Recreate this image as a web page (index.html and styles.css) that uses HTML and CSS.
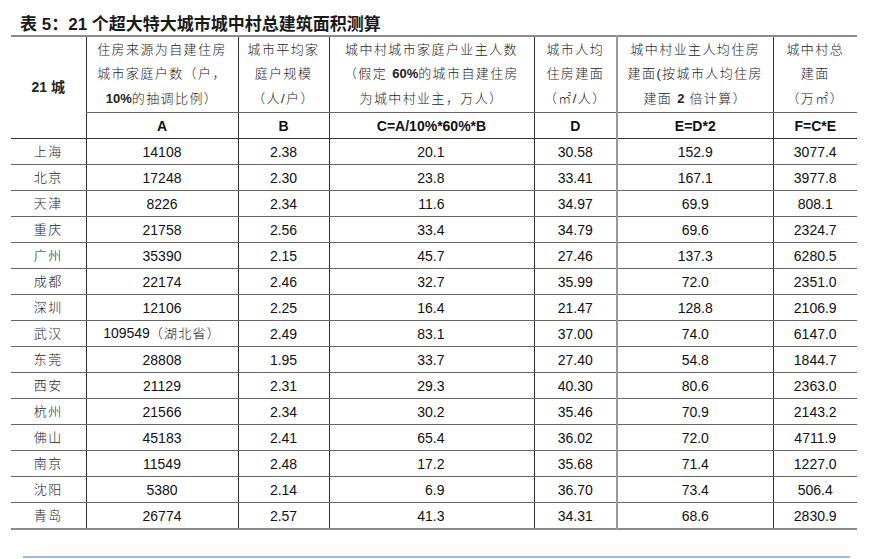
FILE: index.html
```html
<!DOCTYPE html>
<html lang="zh">
<head>
<meta charset="utf-8">
<title>表 5</title>
<link rel="stylesheet" href="styles.css">
</head>
<body>
<div class="page">
  <h1 class="title">表 5：21 个超大特大城市城中村总建筑面积测算</h1>
  <table class="data">
    <colgroup>
      <col class="c1"><col class="c2"><col class="c3"><col class="c4"><col class="c5"><col class="c6"><col class="c7">
    </colgroup>
    <thead>
      <tr class="hd">
        <th rowspan="2" class="city-h"><b>21</b> 城</th>
        <th>住房来源为自建住房<br>城市家庭户数（户，<br><b>10%</b>的抽调比例）</th>
        <th>城市平均家<br>庭户规模<br>（人/户）</th>
        <th>城中村城市家庭户业主人数<br>（假定 <b>60%</b>的城市自建住房<br>为城中村业主，万人）</th>
        <th>城市人均<br>住房建面<br>（㎡/人）</th>
        <th class="sep">城中村业主人均住房<br>建面(按城市人均住房<br>建面 <b>2</b> 倍计算）</th>
        <th>城中村总<br>建面<br>（万㎡）</th>
      </tr>
      <tr class="letters">
        <th>A</th><th>B</th><th>C=A/10%*60%*B</th><th>D</th><th class="sep">E=D*2</th><th>F=C*E</th>
      </tr>
    </thead>
    <tbody>
      <tr><td class="city">上海</td><td>14108</td><td>2.38</td><td class="ra">20.1</td><td>30.58</td><td class="sep">152.9</td><td>3077.4</td></tr>
      <tr><td class="city">北京</td><td>17248</td><td>2.30</td><td class="ra">23.8</td><td>33.41</td><td class="sep">167.1</td><td>3977.8</td></tr>
      <tr><td class="city">天津</td><td>8226</td><td>2.34</td><td class="ra">11.6</td><td>34.97</td><td class="sep">69.9</td><td>808.1</td></tr>
      <tr><td class="city">重庆</td><td>21758</td><td>2.56</td><td class="ra">33.4</td><td>34.79</td><td class="sep">69.6</td><td>2324.7</td></tr>
      <tr><td class="city">广州</td><td>35390</td><td>2.15</td><td class="ra">45.7</td><td>27.46</td><td class="sep">137.3</td><td>6280.5</td></tr>
      <tr><td class="city">成都</td><td>22174</td><td>2.46</td><td class="ra">32.7</td><td>35.99</td><td class="sep">72.0</td><td>2351.0</td></tr>
      <tr><td class="city">深圳</td><td>12106</td><td>2.25</td><td class="ra">16.4</td><td>21.47</td><td class="sep">128.8</td><td>2106.9</td></tr>
      <tr><td class="city">武汉</td><td>109549<span class="cjk">（湖北省）</span></td><td>2.49</td><td class="ra">83.1</td><td>37.00</td><td class="sep">74.0</td><td>6147.0</td></tr>
      <tr><td class="city">东莞</td><td>28808</td><td>1.95</td><td class="ra">33.7</td><td>27.40</td><td class="sep">54.8</td><td>1844.7</td></tr>
      <tr><td class="city">西安</td><td>21129</td><td>2.31</td><td class="ra">29.3</td><td>40.30</td><td class="sep">80.6</td><td>2363.0</td></tr>
      <tr><td class="city">杭州</td><td>21566</td><td>2.34</td><td class="ra">30.2</td><td>35.46</td><td class="sep">70.9</td><td>2143.2</td></tr>
      <tr><td class="city">佛山</td><td>45183</td><td>2.41</td><td class="ra">65.4</td><td>36.02</td><td class="sep">72.0</td><td>4711.9</td></tr>
      <tr><td class="city">南京</td><td>11549</td><td>2.48</td><td class="ra">17.2</td><td>35.68</td><td class="sep">71.4</td><td>1227.0</td></tr>
      <tr><td class="city">沈阳</td><td>5380</td><td>2.14</td><td class="ra">6.9</td><td>36.70</td><td class="sep">73.4</td><td>506.4</td></tr>
      <tr><td class="city">青岛</td><td>26774</td><td>2.57</td><td class="ra">41.3</td><td>34.31</td><td class="sep">68.6</td><td>2830.9</td></tr>
    </tbody>
  </table>
  <div class="rule"></div>
</div>
</body>
</html>
```
FILE: styles.css
```css
html, body {
  margin: 0;
  padding: 0;
  background: #fff;
}

body {
  font-family: "Liberation Sans", "Noto Sans CJK SC", sans-serif;
  color: #111;
}

.page {
  padding: 0 14px 0 11px;
}

.title {
  margin: 0 0 0 9px;
  padding-top: 14px;
  font-size: 17px;
  line-height: 21px;
  height: 21px;
  font-weight: bold;
  color: #1a1a1a;
  font-family: "Liberation Sans", "Noto Sans CJK SC", sans-serif;
}

.data {
  border-collapse: collapse;
  table-layout: fixed;
  width: 846px;
  border-top: 2px solid #8a8a8a;
  border-bottom: 2px solid #8a8a8a;
}

.c1 { width: 75px; }
.c2 { width: 152px; }
.c3 { width: 91px; }
.c4 { width: 205px; }
.c5 { width: 83px; }
.c6 { width: 156px; }
.c7 { width: 84px; }

.data th,
.data td {
  padding: 0;
  text-align: center;
  border-left: 1px solid #333;
  border-bottom: 1px solid #666;
  white-space: nowrap;
}

.data tr > :first-child {
  border-left: none;
}

.data .letters th:first-child {
  border-left: 1px solid #333;
}

.data .sep {
  border-left: 2px solid #9a9a9a;
}

.hd th {
  height: 75px;
  font-family: "Liberation Sans", "Noto Sans CJK SC", sans-serif;
  font-weight: 300;
  font-size: 13px;
  letter-spacing: 1.4px;
  line-height: 24.5px;
  color: #222;
  vertical-align: middle;
}

.hd th b {
  font-weight: bold;
  letter-spacing: 0;
}

.hd th.city-h {
  font-size: 14px;
  font-weight: bold;
  letter-spacing: 0;
  border-bottom: 1px solid #333;
}

.letters th {
  height: 25px;
  font-size: 14px;
  font-weight: bold;
  border-bottom: 1px solid #333;
}

.data td {
  height: 25px;
  font-size: 14px;
  line-height: 16px;
}

.data td.city {
  font-size: 13px;
  font-weight: 300;
  letter-spacing: 1.4px;
  color: #222;
}

.data td.ra {
  text-align: right;
  padding-right: 89px;
}

.cjk {
  font-size: 13px;
  font-weight: 300;
  letter-spacing: 1.2px;
}

.rule {
  margin: 26px 0 0 12px;
  width: 827px;
  border-top: 2px solid #9fb8e6;
}
```
